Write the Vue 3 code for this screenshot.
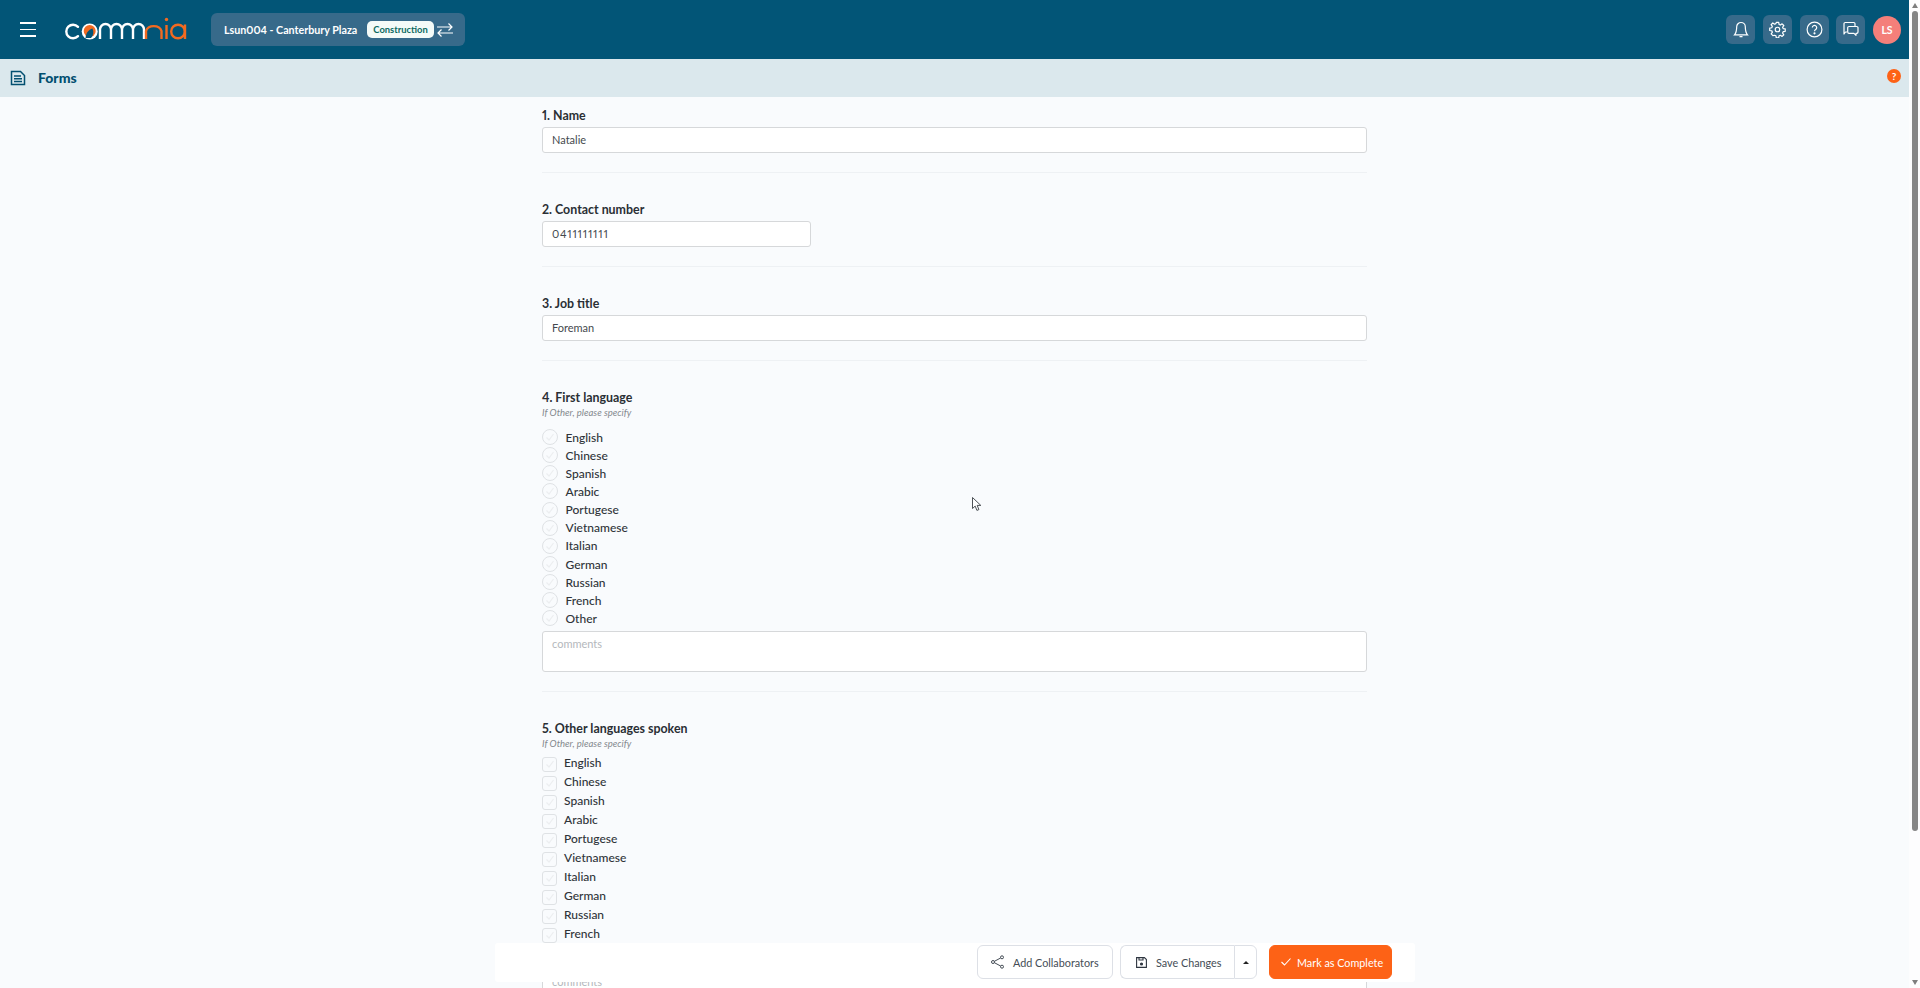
<script setup>
const first = ['English','Chinese','Spanish','Arabic','Portugese','Vietnamese','Italian','German','Russian','French','Other']
</script>

<template>
  <div class="page">
    <div class="column">
      <header class="topbar">
        <div class="left">
          <button class="burger" aria-label="menu"><span></span><span></span><span></span></button>
          <svg class="logo" viewBox="0 0 122 24" width="122" height="24" fill="none" stroke-width="2.4" role="img" aria-label="commnia">
            <path d="M13 9.800A6.800 6.800 0 1 0 13 19.200" stroke="#fff" stroke-linecap="round"/>
            <circle cx="24.700" cy="14.500" r="8" fill="#fff"/>
            <circle cx="24.700" cy="14" r="6" fill="#f26a21"/>
            <path d="M20.500 21c.5-5 3-8.500 7-9.500 1.500 3 1 7-1.500 9.500z" fill="#025577"/>
            <path d="M35 22V12.500a5 5 0 0 1 11 0V22M46 12.500a5 5 0 0 1 11 0V22M57 22V12.500a5 5 0 0 1 11 0V22M68 12.500a5 5 0 0 1 11 0V22" stroke="#fff"/>
            <path d="M81 22V14a8 6.500 0 0 1 15.500 0V22" stroke="#f26a21"/>
            <path d="M101.500 22V8" stroke="#f26a21"/>
            <circle cx="101.500" cy="2.500" r="1.700" fill="#f26a21"/>
            <circle cx="113" cy="14.500" r="6.800" stroke="#f26a21"/>
            <path d="M120 7.500V22" stroke="#f26a21"/>
          </svg>
          <div class="project">
            <span class="pname">Lsun004 - Canterbury Plaza</span>
            <span class="chip">Construction</span>
            <svg width="16" height="14" viewBox="0 0 16 14" fill="none" stroke="#fff" stroke-width="1.200"><path d="M0 4h15M11.500 .5 15 4l-3.500 3.500M16 10H1M4.500 6.500 1 10l3.500 3.500"/></svg>
          </div>
        </div>
        <div class="right">
          <button class="tool" aria-label="notifications"><svg width="16" height="17" viewBox="0 0 16 17" fill="none" stroke="#fff" stroke-width="1.200"><path d="M8 1.500a4.300 4.300 0 0 0-4.300 4.300c0 4.500-.6 6.200-2.200 8h13c-1.600-1.800-2.200-3.500-2.200-8A4.300 4.300 0 0 0 8 1.500ZM6.500 15.600h3"/></svg></button>
          <button class="tool" aria-label="settings"><svg width="17" height="17" viewBox="0 0 24 24" fill="none" stroke="#fff" stroke-width="1.700" stroke-linejoin="round"><circle cx="12" cy="12" r="3.200"/><path d="M10.300 2h3.400l.5 2.900 1.900.8 2.400-1.700 2.400 2.400-1.700 2.400.8 1.900 2.900.5v3.400l-2.900.5-.8 1.900 1.700 2.400-2.400 2.400-2.400-1.700-1.900.8-.5 2.900h-3.400l-.5-2.900-1.900-.8L5.500 20.600l-2.400-2.400 1.700-2.400-.8-1.900L1 13.400V10l2.900-.5.8-1.900L3 5.200l2.400-2.400 2.400 1.700 1.900-.8Z"/></svg></button>
          <button class="tool" aria-label="help"><svg width="17" height="17" viewBox="0 0 17 17" fill="none" stroke="#fff" stroke-width="1.200"><circle cx="8.500" cy="8.500" r="7.400"/><path d="M6.300 6.600a2.200 2.200 0 1 1 3.400 1.900c-.8.500-1.200.9-1.200 1.800"/><circle cx="8.500" cy="12.300" r=".5" fill="#fff"/></svg></button>
          <button class="tool msg" aria-label="messages"><svg width="17" height="17" viewBox="0 0 17 17" fill="none" stroke="#fff" stroke-width="1.200" stroke-linejoin="round"><path d="M5 11H3.500L2 13V2.800A1.300 1.300 0 0 1 3.300 1.500h8.400A1.300 1.300 0 0 1 13 2.800V5.500"/><path d="M7 5.500h7.700A1.300 1.300 0 0 1 16 6.800V11a1.300 1.300 0 0 1-1.300 1.300H14v2l-2-2H7A1.300 1.300 0 0 1 5.700 11V6.800A1.300 1.300 0 0 1 7 5.500Z"/></svg></button>
          <div class="avatar">LS</div>
        </div>
      </header>
      <div class="subbar">
        <div class="subleft">
          <svg width="16" height="16" viewBox="0 0 16 16" fill="none" stroke="#024f70" stroke-width="1.500"><path d="M1.500 1.500h9l4 4v9h-13zM4 6h7M4 8.700h8M4 11.400h8"/></svg>
          <span class="subtitle">Forms</span>
        </div>
        <span class="qmark">?</span>
      </div>

      <main class="body">
        <div class="form">
          <section class="q">
            <label>1. Name</label>
            <div class="input">Natalie</div>
          </section>
          <section class="q">
            <label>2. Contact number</label>
            <div class="input short">0411111111</div>
          </section>
          <section class="q">
            <label>3. Job title</label>
            <div class="input">Foreman</div>
          </section>
          <section class="q">
            <label>4. First language</label>
            <p class="hint hint-radio">If Other, please specify</p>
            <ul class="opts radios">
              <li v-for="o in first" :key="o"><span class="radio"><svg width="10" height="10" viewBox="0 0 10 10" fill="none" stroke="#eceef0" stroke-width="1.200"><path d="M1.500 5.500 4 8l4.500-6"/></svg></span>{{ o }}</li>
            </ul>
            <div class="input area"><span class="ph">comments</span></div>
          </section>
          <section class="q last">
            <label>5. Other languages spoken</label>
            <p class="hint">If Other, please specify</p>
            <ul class="opts checks">
              <li v-for="o in first" :key="o"><span class="check"><svg width="10" height="10" viewBox="0 0 10 10" fill="none" stroke="#eceef0" stroke-width="1.200"><path d="M1.500 5.500 4 8l4.500-6"/></svg></span><span class="ctext">{{ o }}</span></li>
            </ul>
            <div class="input area area-last"><span class="ph">comments</span></div>
          </section>
        </div>
      </main>

      <svg class="cursor" width="11" height="15" viewBox="0 0 11 15" aria-hidden="true"><path d="M.5.500v11l2.700-2.400 1.700 4.300 2-.8-1.700-4.200h3.600z" fill="#fff" stroke="#3a3f44" stroke-width=".9" stroke-linejoin="round"/></svg>

      <footer class="actions">
        <button class="btn collab"><svg width="13" height="14" viewBox="0 0 13 14" fill="none" stroke="#444c55" stroke-width="1"><circle cx="11" cy="2.300" r="1.500"/><circle cx="2" cy="7" r="1.500"/><circle cx="11" cy="11.700" r="1.500"/><path d="M3.400 6.300 9.600 3M3.400 7.700l6.200 3.300"/></svg>Add Collaborators</button>
        <div class="split">
          <button class="btn main"><svg width="11" height="11" viewBox="0 0 11 11" fill="none" stroke="#2e3640" stroke-width="1.100"><path d="M.6.600h7.800l2 2v7.800H.6z"/><path d="M3 .6v2.400h4V.6"/><circle cx="5.500" cy="7" r="1" fill="#2e3640"/></svg>Save Changes</button>
          <button class="btn caret" aria-label="more"><span></span></button>
        </div>
        <button class="btn primary"><svg width="10" height="8" viewBox="0 0 10 8" fill="none" stroke="#fff" stroke-width="1.100"><path d="m.5 4 3 3 6-6.500"/></svg>Mark as Complete</button>
      </footer>
    </div>
    <aside class="scrollbar" aria-hidden="true">
      <i class="arrow up"></i>
      <i class="thumb"></i>
      <i class="arrow down"></i>
    </aside>
  </div>
</template>

<style>
html, body { margin: 0; overflow: hidden; }
</style>

<style scoped>
* { box-sizing: border-box; }
.page { height: 988px; overflow: hidden; display: flex; font-family: Lato, "Noto Sans", sans-serif; color: #33383d; background: #f9fbfd; font-variant-numeric: proportional-nums; }
.column { flex: 1; min-width: 0; display: flex; flex-direction: column; position: relative; }
button { font-family: inherit; border: 0; padding: 0; cursor: pointer; }
.topbar { flex: none; height: 59px; background: #025577; display: flex; align-items: center; justify-content: space-between; padding-right: 8px; }
.left { display: flex; align-items: center; }
.burger { width: 16px; margin-left: 20px; background: none; display: flex; flex-direction: column; gap: 5px; }
.burger span { height: 1.800px; background: #fff; display: block; }
.logo { margin-left: 29px; margin-top: -1px; flex: none; }
.project { height: 33px; margin-left: 24px; width: 254px; background: #376a8a; border-radius: 6px; display: flex; align-items: center; padding-left: 13px; white-space: nowrap; }
.pname { color: #fff; font-size: 10.700px; font-weight: 700; width: 143px; }
.chip { background: #f4fbf8; color: #0c6a62; font-size: 9.400px; font-weight: 700; height: 17px; line-height: 17px; width: 67px; text-align: center; border-radius: 5px; }
.project svg { margin-left: 3px; }
.right { display: flex; align-items: center; gap: 8px; }
.tool { width: 29px; height: 29px; border-radius: 6px; background: #376a8a; display: flex; align-items: center; justify-content: center; }
.msg { margin-left: -1.500px; }
.avatar { width: 28px; height: 28px; margin-left: .500px; border-radius: 50%; background: #f47f7a; color: #fff; font-size: 10.500px; font-weight: 700; display: flex; align-items: center; justify-content: center; }
.subbar { flex: none; height: 38px; background: #dbe8ed; display: flex; align-items: center; justify-content: space-between; padding: 0 8px 0 10px; }
.subleft { display: flex; align-items: center; gap: 12px; margin-top: -1px; }
.subtitle { font-size: 14px; font-weight: 900; color: #024f70; }
.qmark { width: 14px; height: 14px; margin-top: -5px; border-radius: 50%; background: #fd6216; color: #fff; font-size: 10px; font-weight: 700; display: flex; align-items: center; justify-content: center; }
.body { flex: 1; min-height: 0; overflow: hidden; padding-top: 1px; }
.form { width: 825px; margin: 0 auto; }
.q { padding: 10px 0 19px; margin-bottom: 19px; border-bottom: 1px solid #eef1f4; }
.q.last { border-bottom: 0; margin-bottom: 0; }
label { display: block; font-size: 12.400px; font-weight: 700; line-height: 16px; color: #2a2f34; margin-bottom: 3px; }
.input { height: 26px; background: #fff; border: 1px solid #d6d8da; border-radius: 3px; font-size: 11px; line-height: 24px; padding-left: 9px; color: #44494e; }
.short { width: 269px; letter-spacing: .8px; }
.hint { margin: -3px 0 5px; font-size: 9.500px; line-height: 13px; font-style: italic; color: #84898e; }
.hint-radio { margin-bottom: 9px; }
.opts { list-style: none; margin: 0; padding: 0; font-size: 12px; font-weight: 500; color: #2f3439; }
.radios li { height: 18.150px; display: flex; align-items: center; gap: 7.500px; }
.checks li { height: 19.030px; display: flex; align-items: center; gap: 7px; }
.ctext { margin-top: -3px; }
.radio { width: 16px; height: 16px; border-radius: 50%; border: 1px solid #dfe2e5; display: flex; align-items: center; justify-content: center; }
.check { width: 15px; height: 15px; border-radius: 3px; border: 1px solid #dfe2e5; display: flex; align-items: center; justify-content: center; }
.area { height: 41px; margin-top: 3px; }
.area-last { margin-top: 5px; }
.ph { color: #b4b8bc; line-height: 18px; display: block; padding-top: 3px; }
.cursor { position: absolute; left: 972px; top: 497px; }
.actions { position: absolute; left: 495px; top: 943px; width: 920px; height: 39px; background: #fff; display: flex; justify-content: flex-end; align-items: flex-start; gap: 12px; padding: 2px 23px 0 0; border-radius: 3px; }
.btn { height: 34px; background: #fff; border: 1px solid #dde0e6; border-radius: 6px; font-size: 10.800px; color: #444c55; display: flex; align-items: center; white-space: nowrap; }
.collab { width: 136px; padding-left: 13px; gap: 9px; margin-right: -5px; }
.split { display: flex; }
.main { width: 114px; border-radius: 6px 0 0 6px; border-right: 0; padding-left: 15px; gap: 9px; }
.caret { width: 23px; border-radius: 0 6px 6px 0; justify-content: center; }
.caret span { border: 3.500px solid transparent; border-bottom-color: #222; border-top: 0; }
.primary { width: 123px; background: #fd6216; border-color: #fd6216; color: #fff; gap: 6px; padding-left: 11px; }
.scrollbar { flex: none; width: 11px; background: #fdfdfe; display: flex; flex-direction: column; align-items: center; padding: 3px 0; }
.thumb { width: 6px; height: 820px; margin-top: 3px; border-radius: 3px; background: #868686; }
.arrow { border: 3.500px solid transparent; width: 0; height: 0; }
.arrow.up { border-top: 0; border-bottom: 5px solid #7e7e7e; }
.arrow.down { margin-top: auto; border-bottom: 0; border-top: 5px solid #7e7e7e; }
</style>
